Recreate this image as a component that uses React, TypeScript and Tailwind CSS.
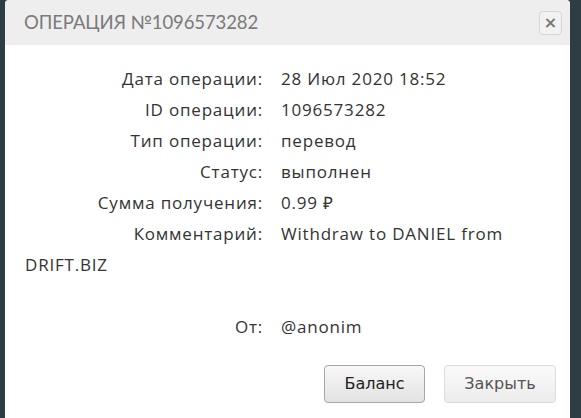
const rows: [string, string][] = [
  ["Дата операции:", "28 Июл 2020 18:52"],
  ["ID операции:", "1096573282"],
  ["Тип операции:", "перевод"],
  ["Статус:", "выполнен"],
  ["Сумма получения:", "0.99 ₽"],
  ["Комментарий:", "Withdraw to DANIEL from DRIFT.BIZ"],
];

export default function App() {
  return (
    <div className="h-[418px] w-full overflow-hidden bg-[#2e3d44] pl-[5px] pr-[11px]">
      <div className="h-[430px] rounded-[4px] bg-white">
        {/* header */}
        <div className="flex h-[45px] items-center justify-between rounded-t-[4px] bg-[#eeeeee] pl-[19px] pr-[8px]">
          <h2 className="font-['Lato',sans-serif] text-[18.5px] tracking-[-0.1px] text-[#7a7a7a]">
            ОПЕРАЦИЯ №1096573282
          </h2>
          <button className="flex h-[24px] w-[23px] items-center justify-center rounded-[4px] border border-[#d6d6d6] bg-[#f2f2f2] font-['DejaVu_Sans',sans-serif] text-[16px] font-bold leading-none text-[#777]">
            ×
          </button>
        </div>

        {/* body */}
        <div className="px-[20px] pt-[18px] font-['Open_Sans',sans-serif] text-[17px] leading-[31px] tracking-[0.8px] text-[#333]">
          {rows.map(([label, value]) => (
            <div key={label}>
              <span className="mr-[18px] inline-block w-[238px] text-right">{label}</span>
              {value}
            </div>
          ))}
          <div className="h-[31px]" />
          <div>
            <span className="mr-[18px] inline-block w-[238px] text-right">От:</span>
            @anonim
          </div>
        </div>

        {/* footer */}
        <div className="mt-[23px] flex justify-end gap-[19px] pr-[14px] font-['DejaVu_Sans',sans-serif] text-[16px]">
          <button className="h-[38px] w-[101px] rounded-[4px] border border-[#a6a6a6] bg-gradient-to-b from-[#f8f8f8] to-[#e2e2e2] text-[#222]">
            Баланс
          </button>
          <button className="h-[38px] w-[112px] rounded-[4px] border border-[#dcdcdc] bg-gradient-to-b from-[#fafafa] to-[#ececec] text-[#555]">
            Закрыть
          </button>
        </div>
      </div>
    </div>
  );
}
